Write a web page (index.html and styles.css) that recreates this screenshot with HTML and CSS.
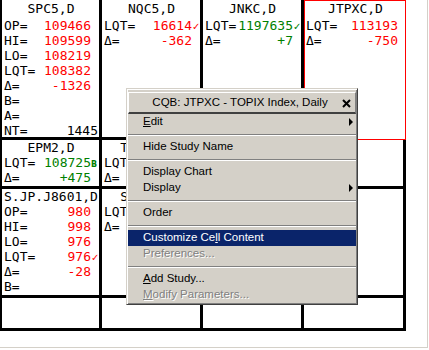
FILE: index.html
```html
<!DOCTYPE html>
<html>
<head>
  <meta charset="utf-8">
  <title>Quote Board</title>
  <link rel="stylesheet" href="styles.css">
</head>
<body>
  <div id="screen">
    <div id="board">
      <!-- row 1 -->
      <div class="cell top">
        <div class="title">SPC5,D</div>
        <div class="line"><span>OP=</span><span class="val red">109466</span><span class="flag"></span></div>
        <div class="line"><span>HI=</span><span class="val red">109599</span><span class="flag"></span></div>
        <div class="line"><span>LO=</span><span class="val red">108219</span><span class="flag"></span></div>
        <div class="line"><span>LQT=</span><span class="val red">108382</span><span class="flag"></span></div>
        <div class="line"><span>&Delta;=</span><span class="val red">-1326</span><span class="flag"></span></div>
        <div class="line"><span>B=</span></div>
        <div class="line"><span>A=</span></div>
        <div class="line"><span>NT=</span><span class="val">1445</span></div>
      </div>
      <div class="cell top">
        <div class="title">NQC5,D</div>
        <div class="line"><span>LQT=</span><span class="val red">16614</span><span class="flag red">&#10003;</span></div>
        <div class="line"><span>&Delta;=</span><span class="val red">-362</span><span class="flag"></span></div>
      </div>
      <div class="cell top">
        <div class="title">JNKC,D</div>
        <div class="line"><span>LQT=</span><span class="val green">1197635</span><span class="flag green">&#10003;</span></div>
        <div class="line"><span>&Delta;=</span><span class="val green">+7</span><span class="flag"></span></div>
      </div>
      <div class="cell top sel">
        <div class="title">JTPXC,D</div>
        <div class="line"><span>LQT=</span><span class="val red">113193</span><span class="flag"></span></div>
        <div class="line"><span>&Delta;=</span><span class="val red">-750</span><span class="flag"></span></div>
      </div>

      <!-- row 2 -->
      <div class="cell">
        <div class="title">EPM2,D</div>
        <div class="line"><span>LQT=</span><span class="val green">108725</span><span class="flag mark green">B</span></div>
        <div class="line"><span>&Delta;=</span><span class="val green">+475</span><span class="flag"></span></div>
      </div>
      <div class="cell">
        <div class="title">TFXDM2,D</div>
        <div class="line"><span>LQT=</span></div>
        <div class="line"><span>&Delta;=</span></div>
      </div>
      <div class="cell"></div>
      <div class="cell"></div>

      <!-- row 3 -->
      <div class="cell">
        <div class="title">S.JP.J8601,D</div>
        <div class="line"><span>OP=</span><span class="val red">980</span><span class="flag"></span></div>
        <div class="line"><span>HI=</span><span class="val red">998</span><span class="flag"></span></div>
        <div class="line"><span>LO=</span><span class="val red">976</span><span class="flag"></span></div>
        <div class="line"><span>LQT=</span><span class="val red">976</span><span class="flag red">&#10003;</span></div>
        <div class="line"><span>&Delta;=</span><span class="val red">-28</span><span class="flag"></span></div>
        <div class="line"><span>B=</span></div>
      </div>
      <div class="cell">
        <div class="title">SGXNK5,D</div>
        <div class="line"><span>LQT=</span></div>
        <div class="line"><span>&Delta;=</span></div>
      </div>
      <div class="cell"></div>
      <div class="cell"></div>

      <!-- row 4 -->
      <div class="cell"></div>
      <div class="cell"></div>
      <div class="cell"></div>
      <div class="cell"></div>
    </div>

    <div id="menu">
      <div class="menu-title">CQB: JTPXC - TOPIX Index, Daily
        <svg class="close" width="9" height="9" viewBox="0 0 9 9">
          <path d="M1 1 L8 8 M8 1 L1 8" stroke="#000" stroke-width="2"/>
        </svg>
      </div>
      <div class="item sub"><u>E</u>dit</div>
      <div class="sep"></div>
      <div class="item">Hide Study Name</div>
      <div class="sep"></div>
      <div class="item">Display Chart</div>
      <div class="item sub">Display</div>
      <div class="sep"></div>
      <div class="item">Order</div>
      <div class="sep"></div>
      <div class="item hot">Customize Ce<u>l</u>l Content</div>
      <div class="item off">Preferences...</div>
      <div class="sep"></div>
      <div class="item"><u>A</u>dd Study...</div>
      <div class="item off"><u>M</u>odify Parameters...</div>
    </div>
  </div>
</body>
</html>
```

FILE: styles.css
```css
body {
  margin: 0;
  background: #fff;
}
#screen {
  position: relative;
  width: 427px;
  height: 347px;
  border-right: 1px solid #d4d0c8;
  border-bottom: 1px solid #d4d0c8;
}
#board {
  display: grid;
  grid-template-columns: 97px 98px 98px 99px;
  grid-template-rows: 137px 46px 106px 30px;
  gap: 3px;
  width: max-content;
  padding: 0 3px 3px 2px;
  background: #000;
  font: 13px "DejaVu Sans Mono", monospace;
  color: #000;
}
.cell {
  background: #fff;
  padding: 0 1px 0 2px;
  overflow: hidden;
  line-height: 15px;
}
.title {
  text-align: center;
  white-space: nowrap;
}
.top .title {
  line-height: 18px;
}
.line {
  display: flex;
  align-items: baseline;
  white-space: nowrap;
}
.val {
  margin-left: auto;
}
.flag {
  width: 7px;
  font: 10px "DejaVu Sans", sans-serif;
}
.mark {
  font-size: 8px;
  font-weight: bold;
}
.red { color: #f00; }
.green { color: #008000; }
.sel {
  margin: 0 -3px -3px 0;
  box-shadow: inset 0 0 0 1px #f00;
}

/* popup menu */
#menu {
  position: absolute;
  left: 126px;
  top: 88px;
  width: 232px;
  box-sizing: border-box;
  padding: 3px 1px 1px 1px;
  background: #d4d0c8;
  border: 1px solid;
  border-color: #d4d0c8 #404040 #404040 #d4d0c8;
  box-shadow: inset 1px 1px 0 #fff, inset -1px -1px 0 #808080;
  font: 11.5px "Liberation Sans", Arial, sans-serif;
  color: #000;
}
.menu-title {
  position: relative;
  height: 19px;
  line-height: 19px;
  padding-right: 4px;
  text-align: center;
  border-top: 1px solid #fff;
  border-left: 1px solid #fff;
  border-right: 1px solid #808080;
  border-bottom: 2px solid #404040;
  white-space: nowrap;
}
.close {
  position: absolute;
  right: 4px;
  top: 6px;
}
.item {
  position: relative;
  height: 16px;
  line-height: 15px;
  padding-left: 15px;
  white-space: nowrap;
}
.sub::after {
  content: "";
  position: absolute;
  right: 3px;
  top: 4px;
  border-left: 4px solid #000;
  border-top: 4px solid transparent;
  border-bottom: 4px solid transparent;
}
.hot {
  background: #0a246a;
  color: #fff;
}
.off {
  color: #808080;
  text-shadow: 1px 1px 0 #fff;
}
.sep {
  height: 2px;
  margin: 4px 0 3px;
  border-top: 1px solid #808080;
  border-bottom: 1px solid #fff;
  box-sizing: border-box;
}
```
